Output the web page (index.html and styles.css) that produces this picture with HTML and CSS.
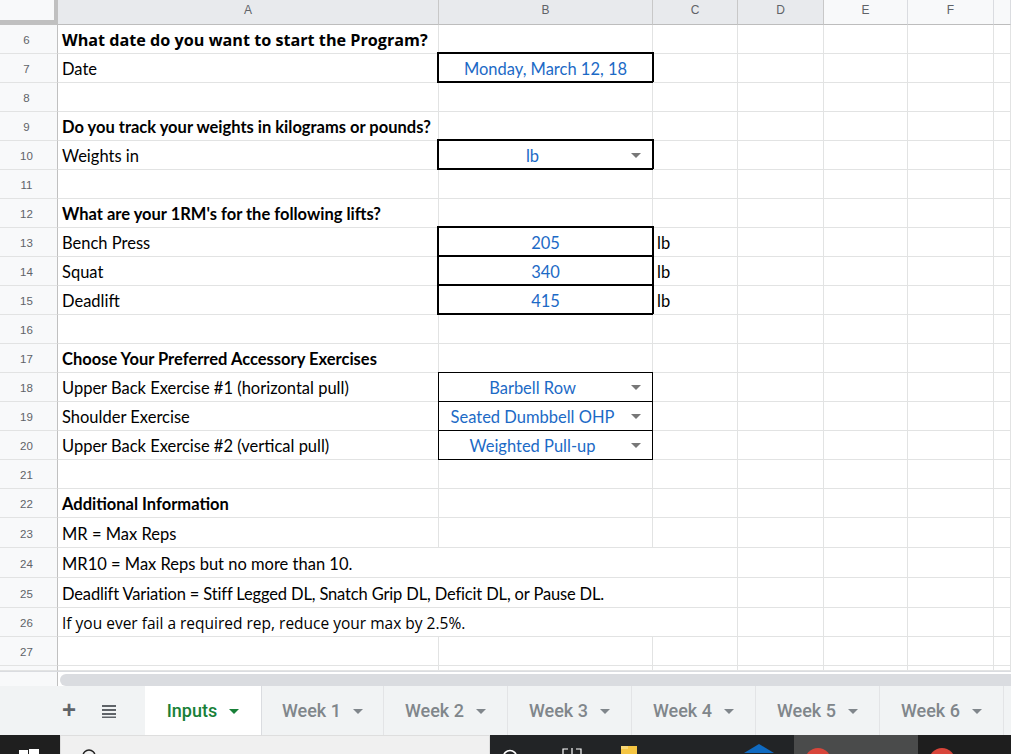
FILE: index.html
```html
<!DOCTYPE html>
<html>
<head>
<meta charset="utf-8">
<link rel="stylesheet" href="styles.css">
</head>
<body>
<div class="app">
  <div class="sheet">
    <div class="row hdr">
      <div class="corner"></div>
      <div class="ch sel">A</div>
      <div class="ch sel">B</div>
      <div class="ch sel">C</div>
      <div class="ch sel">D</div>
      <div class="ch">E</div>
      <div class="ch">F</div>
      <div class="ch"></div>
    </div>

    <div class="row">
      <div class="rh">6</div>
      <div class="c b wide">What date do you want to start the Program?</div>
      <div class="c"></div><div class="c"></div><div class="c"></div><div class="c"></div><div class="c"></div><div class="c"></div>
    </div>
    <div class="row">
      <div class="rh">7</div>
      <div class="c">Date</div>
      <div class="c val box">Monday, March 12, 18</div>
      <div class="c"></div><div class="c"></div><div class="c"></div><div class="c"></div><div class="c"></div>
    </div>
    <div class="row">
      <div class="rh">8</div>
      <div class="c"></div><div class="c"></div><div class="c"></div><div class="c"></div><div class="c"></div><div class="c"></div><div class="c"></div>
    </div>
    <div class="row">
      <div class="rh">9</div>
      <div class="c b">Do you track your weights in kilograms or pounds?</div>
      <div class="c"></div><div class="c"></div><div class="c"></div><div class="c"></div><div class="c"></div><div class="c"></div>
    </div>
    <div class="row">
      <div class="rh">10</div>
      <div class="c">Weights in</div>
      <div class="c val box dd">lb<span class="arrow"></span></div>
      <div class="c"></div><div class="c"></div><div class="c"></div><div class="c"></div><div class="c"></div>
    </div>
    <div class="row">
      <div class="rh">11</div>
      <div class="c"></div><div class="c"></div><div class="c"></div><div class="c"></div><div class="c"></div><div class="c"></div><div class="c"></div>
    </div>
    <div class="row">
      <div class="rh">12</div>
      <div class="c b">What are your 1RM's for the following lifts?</div>
      <div class="c"></div><div class="c"></div><div class="c"></div><div class="c"></div><div class="c"></div><div class="c"></div>
    </div>
    <div class="row">
      <div class="rh">13</div>
      <div class="c">Bench Press</div>
      <div class="c val box">205</div>
      <div class="c">lb</div><div class="c"></div><div class="c"></div><div class="c"></div><div class="c"></div>
    </div>
    <div class="row">
      <div class="rh">14</div>
      <div class="c">Squat</div>
      <div class="c val box">340</div>
      <div class="c">lb</div><div class="c"></div><div class="c"></div><div class="c"></div><div class="c"></div>
    </div>
    <div class="row">
      <div class="rh">15</div>
      <div class="c">Deadlift</div>
      <div class="c val box">415</div>
      <div class="c">lb</div><div class="c"></div><div class="c"></div><div class="c"></div><div class="c"></div>
    </div>
    <div class="row">
      <div class="rh">16</div>
      <div class="c"></div><div class="c"></div><div class="c"></div><div class="c"></div><div class="c"></div><div class="c"></div><div class="c"></div>
    </div>
    <div class="row">
      <div class="rh">17</div>
      <div class="c b">Choose Your Preferred Accessory Exercises</div>
      <div class="c"></div><div class="c"></div><div class="c"></div><div class="c"></div><div class="c"></div><div class="c"></div>
    </div>
    <div class="row">
      <div class="rh">18</div>
      <div class="c">Upper Back Exercise #1 (horizontal pull)</div>
      <div class="c val thin dd">Barbell Row<span class="arrow"></span></div>
      <div class="c"></div><div class="c"></div><div class="c"></div><div class="c"></div><div class="c"></div>
    </div>
    <div class="row">
      <div class="rh">19</div>
      <div class="c">Shoulder Exercise</div>
      <div class="c val thin dd">Seated Dumbbell OHP<span class="arrow"></span></div>
      <div class="c"></div><div class="c"></div><div class="c"></div><div class="c"></div><div class="c"></div>
    </div>
    <div class="row">
      <div class="rh">20</div>
      <div class="c">Upper Back Exercise #2 (vertical pull)</div>
      <div class="c val thin dd">Weighted Pull-up<span class="arrow"></span></div>
      <div class="c"></div><div class="c"></div><div class="c"></div><div class="c"></div><div class="c"></div>
    </div>
    <div class="row">
      <div class="rh">21</div>
      <div class="c"></div><div class="c"></div><div class="c"></div><div class="c"></div><div class="c"></div><div class="c"></div><div class="c"></div>
    </div>
    <div class="row">
      <div class="rh">22</div>
      <div class="c b">Additional Information</div>
      <div class="c"></div><div class="c"></div><div class="c"></div><div class="c"></div><div class="c"></div><div class="c"></div>
    </div>
    <div class="row tall">
      <div class="rh">23</div>
      <div class="c">MR = Max Reps</div>
      <div class="c"></div><div class="c"></div><div class="c"></div><div class="c"></div><div class="c"></div><div class="c"></div>
    </div>
    <div class="row tall">
      <div class="rh">24</div>
      <div class="c span3">MR10 = Max Reps but no more than 10.</div>
      <div class="c"></div><div class="c"></div><div class="c"></div><div class="c"></div>
    </div>
    <div class="row tall">
      <div class="rh">25</div>
      <div class="c span3 narrow">Deadlift Variation = Stiff Legged DL, Snatch Grip DL, Deficit DL, or Pause DL.</div>
      <div class="c"></div><div class="c"></div><div class="c"></div><div class="c"></div>
    </div>
    <div class="row">
      <div class="rh">26</div>
      <div class="c span3 alt">If you ever fail a required rep, reduce your max by 2.5%.</div>
      <div class="c"></div><div class="c"></div><div class="c"></div><div class="c"></div>
    </div>
    <div class="row">
      <div class="rh">27</div>
      <div class="c"></div><div class="c"></div><div class="c"></div><div class="c"></div><div class="c"></div><div class="c"></div><div class="c"></div>
    </div>
    <div class="row stub">
      <div class="rh"></div>
      <div class="c"></div><div class="c"></div><div class="c"></div><div class="c"></div><div class="c"></div><div class="c"></div><div class="c"></div>
    </div>
  </div>

  <div class="scrollrow">
    <div class="scroll-rh"></div>
    <div class="track"><div class="thumb"></div></div>
  </div>

  <div class="tabbar">
    <div class="tools">
      <span class="plus">+</span>
      <svg class="list" width="14" height="14" viewBox="0 0 14 14"><rect x="0" y="1" width="14" height="2" fill="#5f6368"/><rect x="0" y="5" width="14" height="2" fill="#5f6368"/><rect x="0" y="9" width="14" height="2" fill="#5f6368"/><rect x="0" y="12.5" width="14" height="1.5" fill="#5f6368"/></svg>
    </div>
    <div class="tab active">Inputs<span class="tarrow"></span></div>
    <div class="tab">Week 1<span class="tarrow"></span></div>
    <div class="tab">Week 2<span class="tarrow"></span></div>
    <div class="tab">Week 3<span class="tarrow"></span></div>
    <div class="tab">Week 4<span class="tarrow"></span></div>
    <div class="tab">Week 5<span class="tarrow"></span></div>
    <div class="tab">Week 6<span class="tarrow"></span></div>
  </div>

  <div class="taskbar">
    <div class="start">
      <svg width="20" height="5" viewBox="0 0 20 5"><rect x="0" y="1" width="9" height="4" fill="#fff"/><rect x="10" y="0" width="10" height="5" fill="#fff"/></svg>
    </div>
    <div class="search">
      <svg width="16" height="6" viewBox="0 0 16 6"><circle cx="8" cy="8" r="6" fill="none" stroke="#222" stroke-width="1.5"/></svg>
    </div>
    <div class="tb-dark">
      <svg class="ico cortana" width="16" height="5" viewBox="0 0 16 5"><circle cx="8" cy="8" r="6.5" fill="none" stroke="#fff" stroke-width="1.6"/></svg>
      <svg class="ico taskview" width="20" height="6" viewBox="0 0 20 6"><path d="M1 6V1h5M14 1h5v5M10 0v6" fill="none" stroke="#fff" stroke-width="1.2"/></svg>
      <svg class="ico folder" width="18" height="8" viewBox="0 0 18 8"><rect x="1" y="0" width="16" height="8" fill="#f5c542"/><rect x="1" y="0" width="7" height="3" fill="#f8d775"/></svg>
      <svg class="ico box3d" width="30" height="10" viewBox="0 0 30 10"><path d="M15 0L30 9H0Z" fill="#0f6ac1"/></svg>
    </div>
    <div class="tb-active">
      <svg width="28" height="7" viewBox="0 0 28 7"><circle cx="14" cy="14" r="13" fill="#d8453a"/></svg>
    </div>
    <div class="tb-right">
      <svg width="28" height="7" viewBox="0 0 28 7"><circle cx="14" cy="14" r="13" fill="#d8453a"/></svg>
    </div>
  </div>
</div>
</body>
</html>
```

FILE: styles.css
```css
* { box-sizing: border-box; }
html, body { margin: 0; padding: 0; background: #fff; }
body { width: 1011px; height: 754px; overflow: hidden; }

.app {
  display: flex;
  flex-direction: column;
  width: 1011px;
  height: 754px;
  font-family: "Lato", "Noto Sans", sans-serif;
}

.sheet { display: flex; flex-direction: column; }

.row {
  display: grid;
  grid-template-columns: 58px 381px 214px 85px 86px 84px 86px 1fr;
  height: 29px;
}
.row.tall { height: 30px; }
.row.stub { height: 5px; }

.hdr { height: 25px; }

.corner {
  background: #f8f9fa;
  box-shadow: inset -4px -4px 0 #c0c0c0;
  border-bottom: 1px solid #c0c0c0;
}
.ch {
  background: #f8f9fa;
  border-right: 1px solid #dadce0;
  border-bottom: 1px solid #bdbdbd;
  color: #5f6368;
  font-family: "Liberation Sans", Arial, sans-serif;
  font-size: 12px;
  text-align: center;
  line-height: 20px;
}
.ch.sel { background: #e8eaed; border-right-color: #c8c8c8; }

.rh {
  background: #f8f9fa;
  border-right: 1px solid #c0c0c0;
  border-bottom: 1px solid #e2e3e3;
  color: #5f6368;
  font-family: "Liberation Sans", Arial, sans-serif;
  font-size: 11.5px;
  display: flex;
  align-items: center;
  justify-content: center;
  padding: 2px 4px 0 0;
}

.c {
  border-right: 1px solid #e2e3e3;
  border-bottom: 1px solid #e2e3e3;
  font-size: 16.5px;
  color: #000;
  display: flex;
  align-items: center;
  padding: 2px 0 0 4px;
  white-space: nowrap;
  position: relative;
}
.c.b { font-weight: 700; }
.c.wide { font-family: "Open Sans", "Noto Sans", sans-serif; font-size: 16.2px; }
.c.narrow { letter-spacing: -0.15px; }
.c.span3 { grid-column: span 3; }
.c.alt { font-family: "Open Sans", "Noto Sans", sans-serif; font-size: 15.5px; }

.val {
  justify-content: center;
  color: #1c6ac6;
  padding-left: 0;
}
.val.dd { padding-right: 26px; }

.box::after {
  content: "";
  position: absolute;
  top: -2px; left: -2px; right: -2px; bottom: -1px;
  border: 2px solid #000;
  pointer-events: none;
}
.thin::after {
  content: "";
  position: absolute;
  top: -1px; left: -1px; right: -1px; bottom: -1px;
  border: 1px solid #000;
  pointer-events: none;
}

.arrow {
  position: absolute;
  right: 11px;
  top: 12px;
  width: 0; height: 0;
  border-left: 5px solid transparent;
  border-right: 5px solid transparent;
  border-top: 5px solid #777;
}

.scrollrow {
  display: flex;
  height: 15px;
  border-top: 1px solid #dadce0;
}
.scroll-rh {
  width: 58px;
  background: #f8f9fa;
  border-right: 1px solid #c0c0c0;
}
.track {
  flex: 1;
  padding: 2px 0 1px 2px;
  background: #fff;
}
.thumb {
  height: 12px;
  background: #dadce0;
  border-radius: 6px 0 0 6px;
}

.tabbar {
  display: flex;
  height: 49px;
  background: #f1f3f4;
  align-items: stretch;
}
.tools {
  width: 145px;
  display: flex;
  align-items: center;
  padding-left: 62px;
  gap: 26px;
}
.plus {
  font-family: "Liberation Sans", Arial, sans-serif;
  font-size: 24px;
  font-weight: 700;
  color: #5f6368;
  line-height: 1;
  margin-top: -2px;
}
.tab {
  display: flex;
  align-items: center;
  justify-content: center;
  gap: 12px;
  width: 124px;
  border-right: 1px solid #e3e4e6;
  font-family: "Roboto", "Open Sans", sans-serif;
  font-weight: 500;
  font-size: 18px;
  color: #80868b;
}
.tab:nth-child(3) { width: 122px; }
.tab.active {
  width: 117px;
  background: #fff;
  color: #188038;
  border-right: 1px solid #dadce0;
}
.tarrow {
  width: 0; height: 0;
  border-left: 5px solid transparent;
  border-right: 5px solid transparent;
  border-top: 5px solid currentColor;
  margin-top: 2px;
}

.taskbar {
  display: flex;
  height: 19px;
  background: #1f1f1f;
}
.start {
  width: 60px;
  display: flex;
  justify-content: center;
  align-items: flex-end;
  padding-right: 2px;
}
.start svg { display: block; }
.search {
  width: 430px;
  background: #f0f0f0;
  border: 1px solid #dedede;
  border-bottom: none;
  display: flex;
  align-items: flex-end;
  padding-left: 20px;
}
.search svg { display: block; }
.tb-dark {
  width: 304px;
  background: #222426;
  display: flex;
  align-items: flex-end;
}
.ico { display: block; }
.cortana { margin-left: 12px; }
.taskview { margin-left: 44px; margin-bottom: 0; }
.folder { margin-left: 38px; }
.box3d { margin-left: 106px; }
.tb-active {
  width: 124px;
  background: #4a4b4b;
  display: flex;
  align-items: flex-end;
  padding-left: 10px;
}
.tb-right {
  flex: 1;
  background: #1e1e1e;
  display: flex;
  align-items: flex-end;
  padding-left: 10px;
}
.tb-active svg, .tb-right svg { display: block; }
```
